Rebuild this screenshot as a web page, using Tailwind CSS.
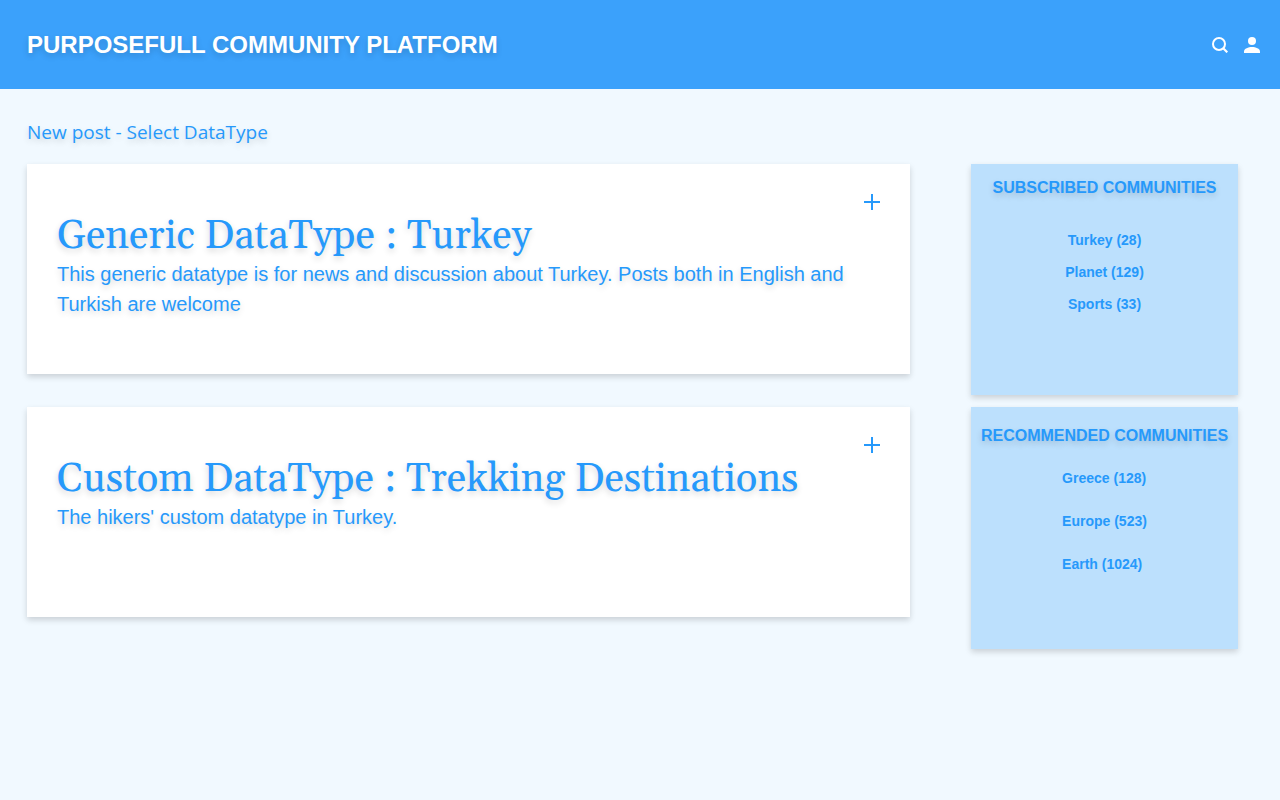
<!DOCTYPE html>
<html lang="en">
<head>
<meta charset="utf-8">
<meta name="viewport" content="width=device-width, initial-scale=1">
<title>Purposefull Community Platform</title>
<script src="https://cdn.jsdelivr.net/npm/@tailwindcss/browser@4"></script>
</head>
<body class="min-h-screen bg-[#f1f9ff] font-['Liberation_Sans',Arial,sans-serif] text-[#2699fb]">
  <header class="flex items-center justify-between bg-[#3ba1fb] pt-[30px] pb-[29px] pr-5 pl-[27px] text-white">
    <h1 class="text-2xl leading-[30px] font-bold [text-shadow:0_3px_6px_rgb(0_0_0/0.16)]">PURPOSEFULL COMMUNITY PLATFORM</h1>
    <div class="flex items-center gap-4">
      <button type="button" aria-label="Search">
        <svg class="block size-4" viewBox="0 0 16 16" fill="none" stroke="currentColor" stroke-width="2" aria-hidden="true"><circle cx="7" cy="7" r="6"/><path d="M11 11 15.300 15.300" stroke-width="2.200"/></svg>
      </button>
      <button type="button" aria-label="Account">
        <svg class="block size-4" viewBox="0 0 16 16" fill="currentColor" aria-hidden="true"><circle cx="8" cy="4" r="4"/><path d="M8 10c-3.700 0-8 1.600-8 4.400V16h16v-1.600C16 11.600 11.700 10 8 10z"/></svg>
      </button>
    </div>
  </header>

  <main class="pt-[27px] pr-[42px] pb-10 pl-[27px]">
    <h2 class="mb-4 font-['Open_Sans','Noto_Sans',sans-serif] text-[19px] leading-8 [text-shadow:0_3px_6px_rgb(0_0_0/0.16)]">New post - Select DataType</h2>
    <div class="flex items-start gap-[61px]">
      <div class="flex min-w-0 flex-1 flex-col gap-[33px]">
        <article class="flex min-h-[210px] flex-col bg-white px-[30px] pt-[30px] pb-7 shadow-[0_3px_6px_rgb(0_0_0/0.16)]">
          <button type="button" aria-label="Add generic post" class="self-end"><svg class="block size-4" viewBox="0 0 16 16" stroke="currentColor" stroke-width="2" aria-hidden="true"><path d="M8 0v16M0 8h16"/></svg></button>
          <h3 class="pt-1 font-[Georgia,Gelasio,'Liberation_Serif',serif] text-[40px] leading-[45px] [text-shadow:0_3px_6px_rgb(0_0_0/0.16)]">Generic DataType : Turkey</h3>
          <p class="text-xl leading-[30px] [text-shadow:0_3px_6px_rgb(0_0_0/0.16)]">This generic datatype is for news and discussion about Turkey. Posts both in English and Turkish are welcome</p>
        </article>
        <article class="flex min-h-[210px] flex-col bg-white px-[30px] pt-[30px] pb-7 shadow-[0_3px_6px_rgb(0_0_0/0.16)]">
          <button type="button" aria-label="Add custom post" class="self-end"><svg class="block size-4" viewBox="0 0 16 16" stroke="currentColor" stroke-width="2" aria-hidden="true"><path d="M8 0v16M0 8h16"/></svg></button>
          <h3 class="pt-1 font-[Georgia,Gelasio,'Liberation_Serif',serif] text-[40px] leading-[45px] [text-shadow:0_3px_6px_rgb(0_0_0/0.16)]">Custom DataType : Trekking Destinations</h3>
          <p class="text-xl leading-[30px] [text-shadow:0_3px_6px_rgb(0_0_0/0.16)]">The hikers' custom datatype in Turkey.</p>
        </article>
      </div>

      <aside class="flex w-[267px] shrink-0 flex-col gap-3 font-bold">
        <section class="min-h-[231px] bg-[#bce0fd] pt-3 pb-8 text-center shadow-[0_3px_6px_rgb(0_0_0/0.16)]">
          <h2 class="text-base [text-shadow:0_3px_6px_rgb(0_0_0/0.16)]">SUBSCRIBED COMMUNITIES</h2>
          <ul class="mt-6 text-sm leading-8">
            <li><a href="#">Turkey (28)</a></li>
            <li><a href="#">Planet (129)</a></li>
            <li><a href="#">Sports (33)</a></li>
          </ul>
        </section>
        <section class="min-h-[242px] bg-[#bce0fd] pt-[17px] pb-8 shadow-[0_3px_6px_rgb(0_0_0/0.16)]">
          <h2 class="text-center text-base [text-shadow:0_3px_6px_rgb(0_0_0/0.16)]">RECOMMENDED COMMUNITIES</h2>
          <ul class="mx-auto mt-[9px] w-fit text-sm leading-[43px]">
            <li><a href="#">Greece (128)</a></li>
            <li><a href="#">Europe (523)</a></li>
            <li><a href="#">Earth (1024)</a></li>
          </ul>
        </section>
      </aside>
    </div>
  </main>
</body>
</html>
